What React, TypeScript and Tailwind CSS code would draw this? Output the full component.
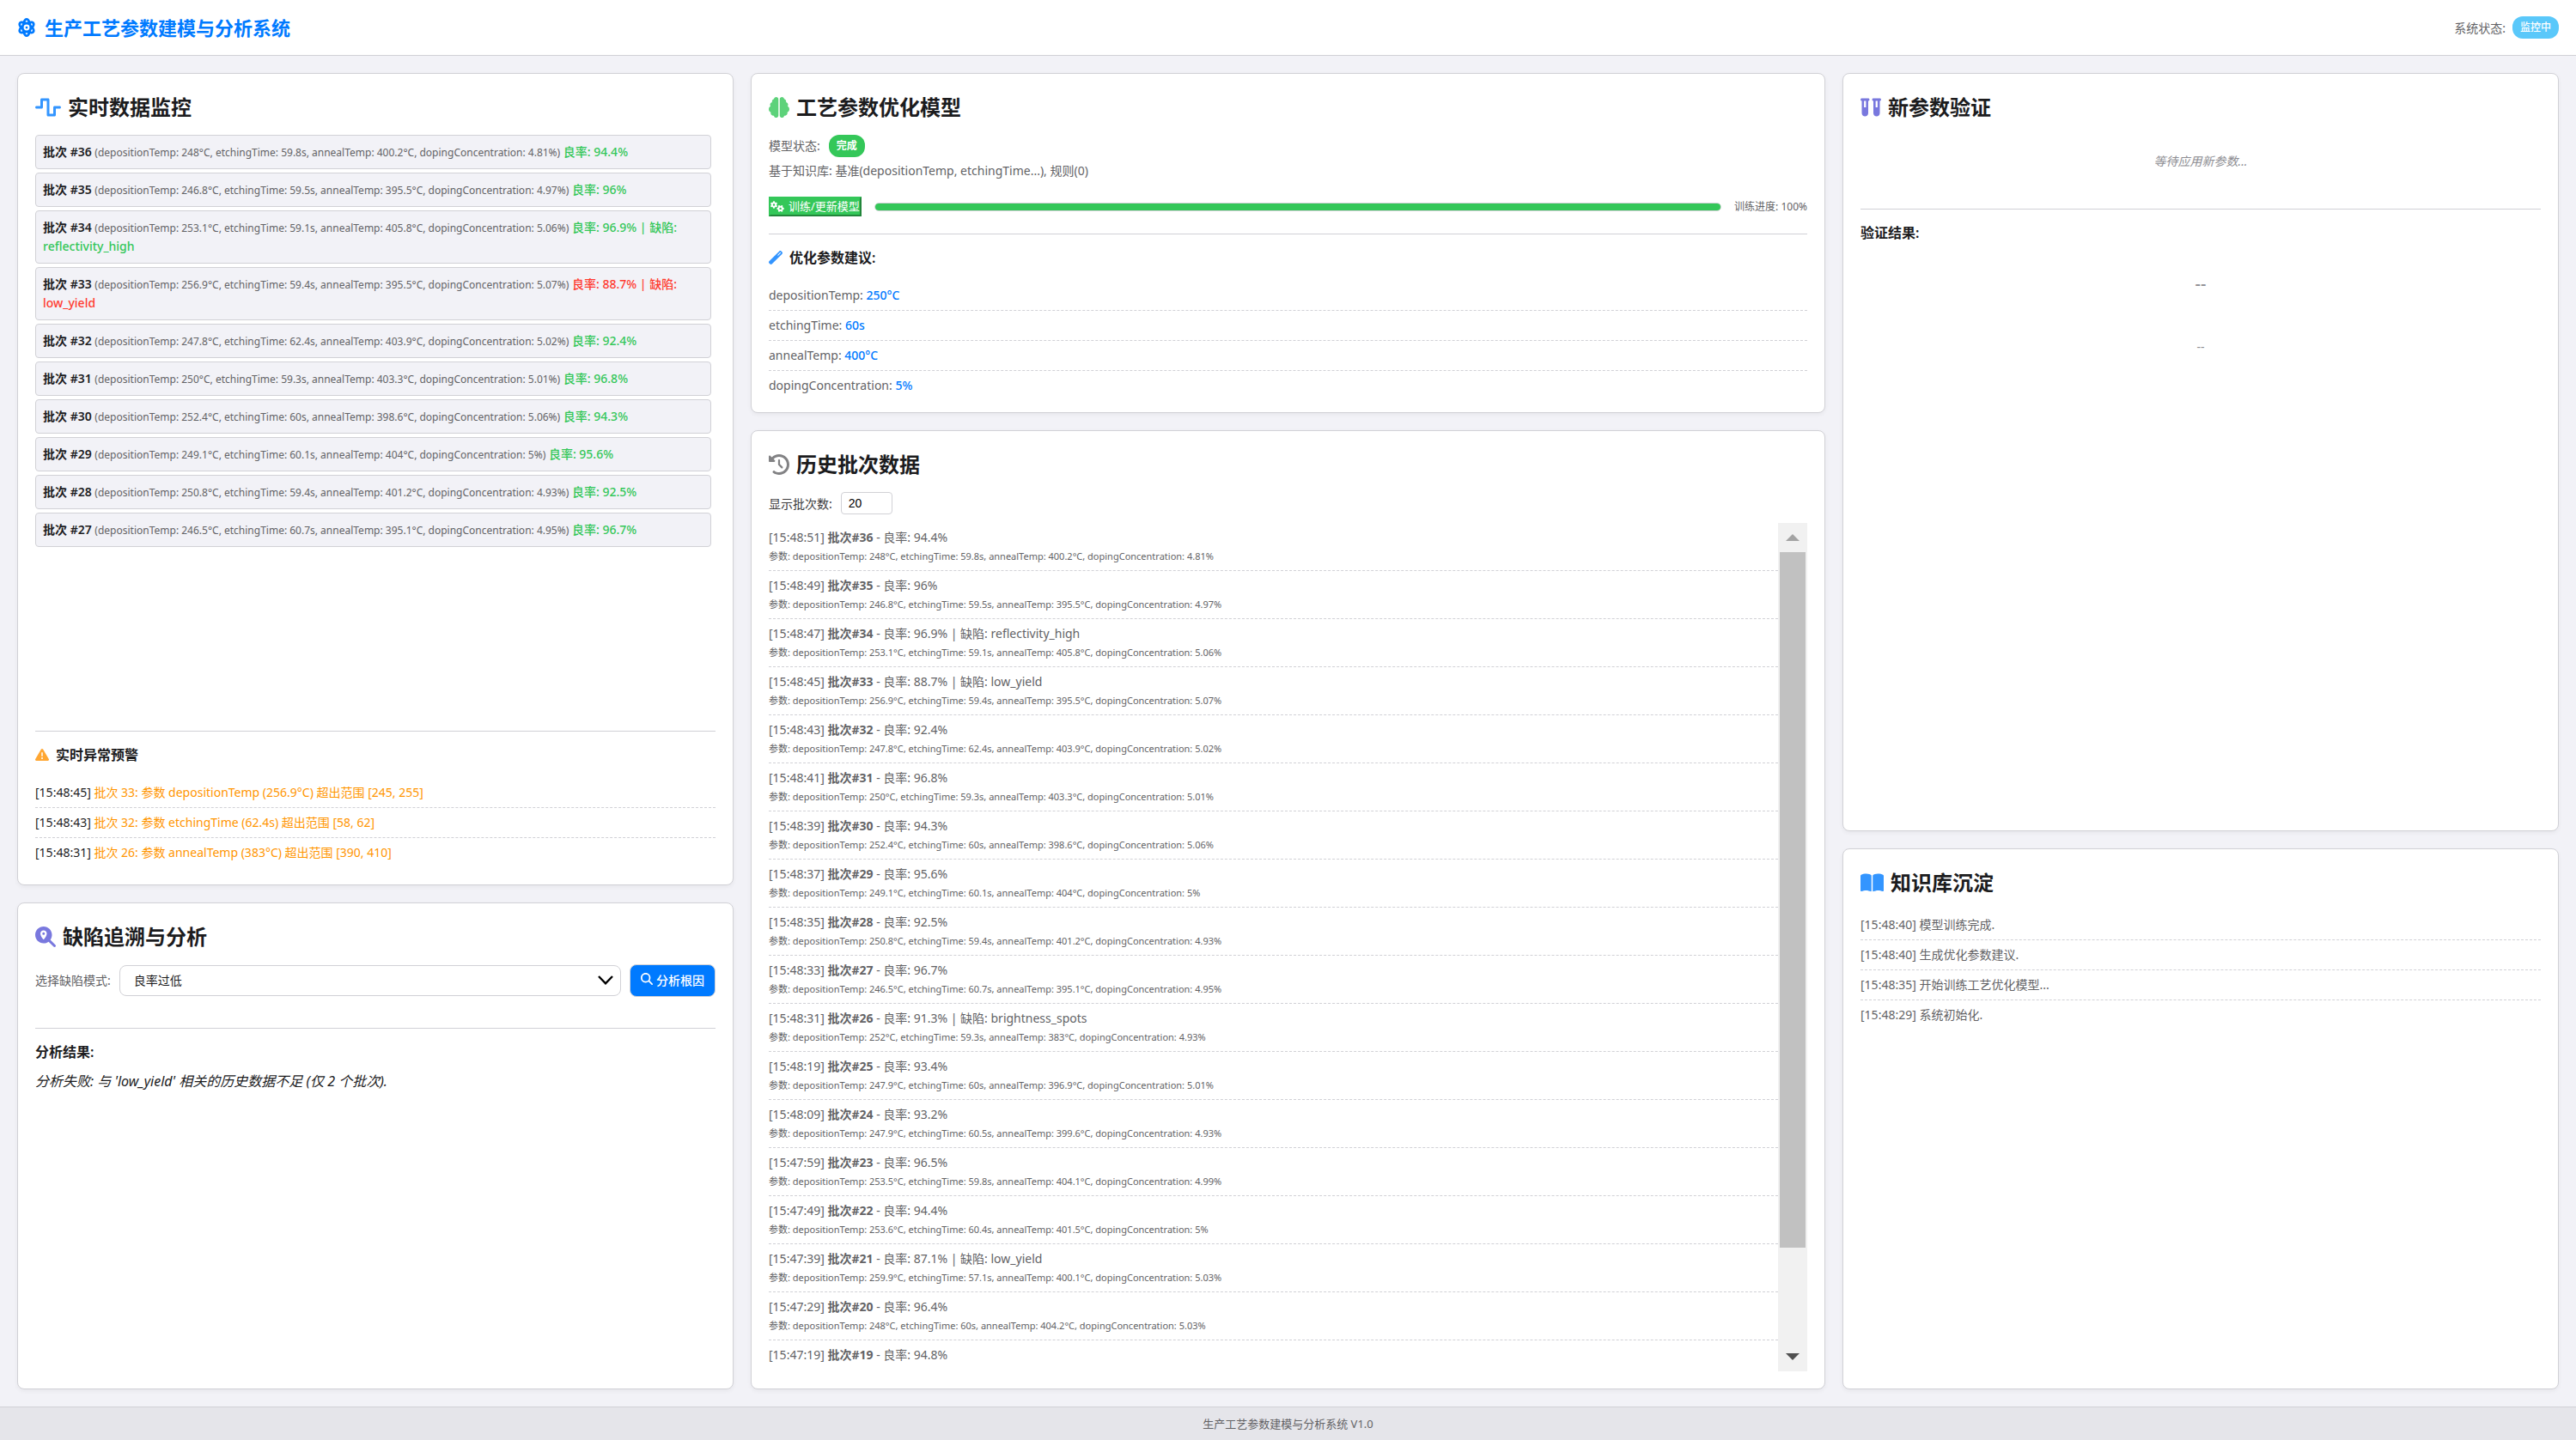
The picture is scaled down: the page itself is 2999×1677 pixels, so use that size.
import type { ReactNode } from "react";
import {
  FaAtom,
  FaBookOpen,
  FaBrain,
  FaClockRotateLeft,
  FaGears,
  FaMagnifyingGlass,
  FaMagnifyingGlassLocation,
  FaTriangleExclamation,
  FaVials,
  FaWandMagic,
  FaWaveSquare,
} from "react-icons/fa6";

type Batch = {
  id: number;
  time: string;
  yieldRate: string;
  params?: string;
  defect?: string;
};

const params = (temp: string, time: string, anneal: string, doping: string) =>
  `depositionTemp: ${temp}°C, etchingTime: ${time}s, annealTemp: ${anneal}°C, dopingConcentration: ${doping}%`;

const batches: Batch[] = [
  { id: 36, time: "15:48:51", yieldRate: "94.4%", params: params("248", "59.8", "400.2", "4.81") },
  { id: 35, time: "15:48:49", yieldRate: "96%", params: params("246.8", "59.5", "395.5", "4.97") },
  { id: 34, time: "15:48:47", yieldRate: "96.9%", params: params("253.1", "59.1", "405.8", "5.06"), defect: "reflectivity_high" },
  { id: 33, time: "15:48:45", yieldRate: "88.7%", params: params("256.9", "59.4", "395.5", "5.07"), defect: "low_yield" },
  { id: 32, time: "15:48:43", yieldRate: "92.4%", params: params("247.8", "62.4", "403.9", "5.02") },
  { id: 31, time: "15:48:41", yieldRate: "96.8%", params: params("250", "59.3", "403.3", "5.01") },
  { id: 30, time: "15:48:39", yieldRate: "94.3%", params: params("252.4", "60", "398.6", "5.06") },
  { id: 29, time: "15:48:37", yieldRate: "95.6%", params: params("249.1", "60.1", "404", "5") },
  { id: 28, time: "15:48:35", yieldRate: "92.5%", params: params("250.8", "59.4", "401.2", "4.93") },
  { id: 27, time: "15:48:33", yieldRate: "96.7%", params: params("246.5", "60.7", "395.1", "4.95") },
  { id: 26, time: "15:48:31", yieldRate: "91.3%", params: params("252", "59.3", "383", "4.93"), defect: "brightness_spots" },
  { id: 25, time: "15:48:19", yieldRate: "93.4%", params: params("247.9", "60", "396.9", "5.01") },
  { id: 24, time: "15:48:09", yieldRate: "93.2%", params: params("247.9", "60.5", "399.6", "4.93") },
  { id: 23, time: "15:47:59", yieldRate: "96.5%", params: params("253.5", "59.8", "404.1", "4.99") },
  { id: 22, time: "15:47:49", yieldRate: "94.4%", params: params("253.6", "60.4", "401.5", "5") },
  { id: 21, time: "15:47:39", yieldRate: "87.1%", params: params("259.9", "57.1", "400.1", "5.03"), defect: "low_yield" },
  { id: 20, time: "15:47:29", yieldRate: "96.4%", params: params("248", "60", "404.2", "5.03") },
  { id: 19, time: "15:47:19", yieldRate: "94.8%" },
];

const alerts = [
  { time: "15:48:45", text: "批次 33: 参数 depositionTemp (256.9°C) 超出范围 [245, 255]" },
  { time: "15:48:43", text: "批次 32: 参数 etchingTime (62.4s) 超出范围 [58, 62]" },
  { time: "15:48:31", text: "批次 26: 参数 annealTemp (383°C) 超出范围 [390, 410]" },
];

const suggestions = [
  { name: "depositionTemp", value: "250°C" },
  { name: "etchingTime", value: "60s" },
  { name: "annealTemp", value: "400°C" },
  { name: "dopingConcentration", value: "5%" },
];

const knowledge = [
  { time: "15:48:40", text: "模型训练完成." },
  { time: "15:48:40", text: "生成优化参数建议." },
  { time: "15:48:35", text: "开始训练工艺优化模型..." },
  { time: "15:48:29", text: "系统初始化." },
];

type CardProps = {
  icon: ReactNode;
  title: string;
  className?: string;
  children: ReactNode;
};

function Card({ icon, title, className = "", children }: CardProps) {
  return (
    <section
      className={`flex min-h-0 flex-col rounded-lg border border-[#d1d1d6] bg-white p-5 shadow-[0_2px_5px_rgba(0,0,0,0.05)] ${className}`}
    >
      <h2 className="mb-[13px] flex items-center gap-2 text-[24px] font-semibold leading-[38px]">
        {icon}
        {title}
      </h2>
      {children}
    </section>
  );
}

function MonitorCard() {
  return (
    <Card
      title="实时数据监控"
      icon={<FaWaveSquare className="h-6 w-[30px] text-[#3395ff]" />}
    >
      <ul className="flex min-h-0 flex-1 flex-col gap-1 overflow-hidden pr-[5px] leading-[22px]">
        {batches.slice(0, 10).map((batch) => {
          const color =
            batch.defect === "low_yield" ? "text-[#ff3b30]" : "text-[#34c759]";
          return (
            <li
              key={batch.id}
              className="rounded border border-[#d1d1d6] bg-[#f2f2f7] px-2 py-2"
            >
              <strong className="font-semibold">批次 #{batch.id}</strong>{" "}
              <span className="text-[12px] leading-5 text-[#636366]">
                ({batch.params})
              </span>{" "}
              <span className={`font-medium ${color}`}>
                良率: {batch.yieldRate}
                {batch.defect && " | 缺陷: "}
              </span>
              {batch.defect && (
                <span className={`font-medium ${color}`}>{batch.defect}</span>
              )}
            </li>
          );
        })}
      </ul>

      <div className="border-t border-[#d1d1d6] pt-[15px]">
        <h3 className="mb-[15px] flex items-center gap-2 text-[16px] font-semibold leading-6">
          <FaTriangleExclamation className="text-[#ffa733]" />
          实时异常预警
        </h3>
        <ul className="leading-[22px]">
          {alerts.map((alert) => (
            <li
              key={alert.time}
              className="border-b border-dashed border-[#d1d1d6] py-[6px] last:border-b-0"
            >
              [{alert.time}] <span className="text-[#ff9500]">{alert.text}</span>
            </li>
          ))}
        </ul>
      </div>
    </Card>
  );
}

function DefectCard() {
  return (
    <Card
      title="缺陷追溯与分析"
      icon={<FaMagnifyingGlassLocation className="text-[#7978de]" />}
    >
      <div className="flex items-center gap-[10px]">
        <label htmlFor="defect-mode" className="text-[#636366]">
          选择缺陷模式:
        </label>
        <div className="relative flex-1">
          <select
            id="defect-mode"
            className="h-9 w-full appearance-none rounded-lg border border-[#d1d1d6] bg-white px-4 text-[#1c1c1e]"
          >
            <option>良率过低</option>
          </select>
          <svg
            viewBox="0 0 18 11"
            className="pointer-events-none absolute inset-y-0 right-[9px] my-auto h-[11px] w-[18px]"
            fill="none"
            stroke="#000"
            strokeWidth="2.4"
          >
            <path d="m1 1 8 8.3L17 1" />
          </svg>
        </div>
        <button className="flex h-[38px] items-center gap-1 rounded-lg border border-[#d1d1d6] bg-[#007aff] px-3 font-medium text-white">
          <FaMagnifyingGlass className="mb-1" />
          分析根因
        </button>
      </div>

      <div className="mt-9 border-t border-[#d1d1d6] pt-[15px] text-[16px] leading-6">
        <h3 className="mb-[10px] font-semibold">分析结果:</h3>
        <p className="italic">分析失败: 与 'low_yield' 相关的历史数据不足 (仅 2 个批次).</p>
      </div>
    </Card>
  );
}

function ModelCard() {
  return (
    <Card
      title="工艺参数优化模型"
      icon={<FaBrain className="text-[#5dd27a]" />}
    >
      <div className="text-[#636366]">
        <p className="flex items-center gap-[10px] leading-[26px]">
          模型状态:
          <span className="rounded-xl bg-[#34c759] px-[9px] text-[12px] font-semibold text-white">
            完成
          </span>
        </p>
        <p className="mt-[5px] leading-[22px]">
          基于知识库: 基准(depositionTemp, etchingTime...), 规则(0)
        </p>
      </div>

      <div className="mt-[19px] flex items-center gap-[15px] pb-5">
        <button className="flex h-[23px] items-center gap-[5px] border-2 border-[#34c759] border-b-[#22863b] border-r-[#22863b] bg-[#34c759] text-[13px] text-white">
          <FaGears className="h-[13px] w-4" />
          训练/更新模型
        </button>
        <div className="h-[10px] flex-1 overflow-hidden rounded-[5px] border border-[#d1d1d6] bg-[#e5e5ea]">
          <div className="h-full w-full bg-[#34c759]" />
        </div>
        <span className="text-[12px] text-[#636366]">训练进度: 100%</span>
      </div>

      <div className="border-t border-[#d1d1d6] pt-[15px]">
        <h3 className="mb-[15px] flex items-center gap-2 text-[16px] font-semibold leading-6">
          <FaWandMagic className="text-[#3395ff]" />
          优化参数建议:
        </h3>
        <ul className="leading-[22px] text-[#636366]">
          {suggestions.map((item) => (
            <li
              key={item.name}
              className="border-b border-dashed border-[#d1d1d6] py-[6px] last:border-b-0 last:pb-0"
            >
              {item.name}:{" "}
              <span className="font-medium text-[#007aff]">{item.value}</span>
            </li>
          ))}
        </ul>
      </div>
    </Card>
  );
}

function HistoryCard() {
  return (
    <Card
      title="历史批次数据"
      icon={<FaClockRotateLeft className="text-[#828284]" />}
      className="flex-1"
    >
      <div className="mb-[10px] flex items-center gap-[10px]">
        <label htmlFor="batch-count" className="text-[#3a3a3c]">
          显示批次数:
        </label>
        <input
          id="batch-count"
          type="text"
          inputMode="numeric"
          defaultValue="20"
          className="h-[26px] w-[60px] rounded border border-[#d1d1d6] px-2 font-[family-name:'Liberation_Sans',Arial,sans-serif] text-black"
        />
      </div>

      <div className="flex min-h-0 flex-1">
        <ul className="flex-1 overflow-hidden text-[#636366]">
          {batches.map((batch) => (
            <li
              key={batch.id}
              className="border-b border-dashed border-[#d1d1d6] py-[6px] last:border-b-0 last:pb-0"
            >
              <p className="leading-[22px]">
                [{batch.time}] <strong className="font-bold">批次#{batch.id}</strong> - 良率:{" "}
                {batch.yieldRate}
                {batch.defect && ` | 缺陷: ${batch.defect}`}
              </p>
              {batch.params && (
                <p className="text-[11px] leading-[21px]">参数: {batch.params}</p>
              )}
            </li>
          ))}
        </ul>
        <Scrollbar />
      </div>
    </Card>
  );
}

function Scrollbar() {
  return (
    <div className="flex w-[34px] flex-col bg-[#f1f1f1]" aria-hidden="true">
      <div className="flex h-[34px] items-center justify-center">
        <svg width="16" height="8" viewBox="0 0 16 8" fill="#a3a3a3">
          <path d="M0 8 8 0l8 8z" />
        </svg>
      </div>
      <div className="flex-1 px-[2px]">
        <div className="h-[88%] bg-[#c1c1c1]" />
      </div>
      <div className="flex h-[34px] items-center justify-center">
        <svg width="16" height="8" viewBox="0 0 16 8" fill="#505050">
          <path d="M0 0h16L8 8z" />
        </svg>
      </div>
    </div>
  );
}

function ValidationCard() {
  return (
    <Card
      title="新参数验证"
      icon={<FaVials className="text-[#7978de]" />}
    >
      <p className="py-5 text-center italic leading-[22px] text-[#8e8e93]">
        等待应用新参数...
      </p>
      <div className="mt-6 border-t border-[#d1d1d6] pt-[15px]">
        <h3 className="text-[16px] font-semibold leading-6">验证结果:</h3>
        <div className="text-center text-[#8e8e93]">
          <p className="mt-8 text-[20px] font-medium leading-[30px]">--</p>
          <p className="mt-12 leading-[22px]">--</p>
        </div>
      </div>
    </Card>
  );
}

function KnowledgeCard() {
  return (
    <Card
      title="知识库沉淀"
      icon={<FaBookOpen className="h-6 w-[27px] text-[#3395ff]" />}
    >
      <ul className="leading-[22px] text-[#636366]">
        {knowledge.map((entry) => (
          <li
            key={entry.text}
            className="border-b border-dashed border-[#d1d1d6] py-[6px] last:border-b-0"
          >
            [{entry.time}] {entry.text}
          </li>
        ))}
      </ul>
    </Card>
  );
}

export default function App() {
  return (
    <div className="flex h-screen flex-col bg-[#f2f2f7] font-['Noto_Sans','Noto_Sans_CJK_SC',sans-serif] text-[14px] text-[#1c1c1e]">
      <header className="flex items-center justify-between border-b border-[#d1d1d6] bg-white px-5 py-[15px]">
        <h1 className="flex items-center gap-[10px] text-[22px] font-semibold leading-[34px] text-[#007aff]">
          <FaAtom />
          生产工艺参数建模与分析系统
        </h1>
        <p className="flex items-center gap-2 text-[#636366]">
          系统状态:
          <span className="rounded-xl bg-[#5ac8fa] px-[9px] text-[12px] font-medium leading-[26px] text-white">
            监控中
          </span>
        </p>
      </header>

      <main className="grid min-h-0 flex-1 grid-cols-[1fr_1.5fr_1fr] gap-5 p-5">
        <div className="grid min-h-0 grid-rows-[minmax(0,5fr)_minmax(0,3fr)] gap-5">
          <MonitorCard />
          <DefectCard />
        </div>
        <div className="flex min-h-0 flex-col gap-5">
          <ModelCard />
          <HistoryCard />
        </div>
        <div className="grid min-h-0 grid-rows-[minmax(0,7fr)_minmax(0,5fr)] gap-5">
          <ValidationCard />
          <KnowledgeCard />
        </div>
      </main>

      <footer className="border-t border-[#d1d1d6] bg-[#e5e5ea] py-[9px] text-center text-[13px] leading-5 text-[#636366]">
        生产工艺参数建模与分析系统 V1.0
      </footer>
    </div>
  );
}
